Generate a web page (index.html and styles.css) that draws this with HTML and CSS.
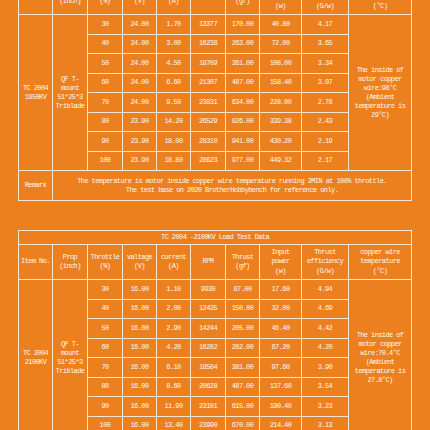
FILE: index.html
```html
<!DOCTYPE html>
<html>
<head>
<meta charset="utf-8">
<link rel="stylesheet" href="styles.css">
</head>
<body>
<div class="page">
  <table class="data first">
    <colgroup>
      <col class="c1"><col class="c2"><col class="c3"><col class="c4"><col class="c5"><col class="c6"><col class="c7"><col class="c8"><col class="c9"><col class="c10">
    </colgroup>
    <tr class="title"><td colspan="10">TC 2004 -1950KV Load Test Data</td></tr>
    <tr class="head">
      <td>Item No.</td><td>Prop<br>(inch)</td><td>Throttle<br>(%)</td><td>voltage<br>(V)</td><td>current<br>(A)</td><td>RPM</td><td>Thrust<br>(gf)</td><td>Input<br>power<br>(w)</td><td>Thrust<br>efficiency<br>(G/w)</td><td>copper wire<br>temperature<br>(°C)</td>
    </tr>
    <tr class="row"><td rowspan="8" class="multi">TC 2004<br>1950KV</td><td rowspan="8" class="multi">QF T-<br>mount<br>51*25*3<br>Triblade</td><td>30</td><td>24.00</td><td>1.70</td><td>13377</td><td>170.00</td><td>40.80</td><td>4.17</td><td rowspan="8" class="multi">The inside of<br>motor copper<br>wire:98°C<br>(Ambient<br>temperature is<br>29°C)</td></tr>
    <tr class="row"><td>40</td><td>24.00</td><td>3.00</td><td>16238</td><td>263.00</td><td>72.00</td><td>3.65</td></tr>
    <tr class="row"><td>50</td><td>24.00</td><td>4.50</td><td>18709</td><td>361.00</td><td>108.00</td><td>3.34</td></tr>
    <tr class="row"><td>60</td><td>24.00</td><td>6.60</td><td>21307</td><td>487.00</td><td>158.40</td><td>3.07</td></tr>
    <tr class="row"><td>70</td><td>24.00</td><td>9.50</td><td>23831</td><td>634.00</td><td>228.00</td><td>2.78</td></tr>
    <tr class="row"><td>80</td><td>23.90</td><td>14.20</td><td>26529</td><td>826.00</td><td>339.38</td><td>2.43</td></tr>
    <tr class="row"><td>90</td><td>23.90</td><td>18.00</td><td>28310</td><td>941.00</td><td>430.20</td><td>2.19</td></tr>
    <tr class="row"><td>100</td><td>23.90</td><td>18.80</td><td>28623</td><td>977.00</td><td>449.32</td><td>2.17</td></tr>
    <tr class="remark"><td>Remark</td><td colspan="9" class="multi">The temperature is motor inside copper wire temperature running 2MIN at 100% throttle.<br>The test base on 2020 BrotherHobbybench for reference only.</td></tr>
  </table>

  <table class="data second">
    <colgroup>
      <col class="c1"><col class="c2"><col class="c3"><col class="c4"><col class="c5"><col class="c6"><col class="c7"><col class="c8"><col class="c9"><col class="c10">
    </colgroup>
    <tr class="title"><td colspan="10">TC 2004 -2100KV Load Test Data</td></tr>
    <tr class="head">
      <td>Item No.</td><td>Prop<br>(inch)</td><td>Throttle<br>(%)</td><td>valtage<br>(V)</td><td>current<br>(A)</td><td>RPM</td><td>Thrust<br>(gf)</td><td>Input<br>power<br>(w)</td><td>Thrust<br>efficiency<br>(G/w)</td><td>copper wire<br>temperature<br>(°C)</td>
    </tr>
    <tr class="row"><td rowspan="8" class="multi">TC 2004<br>2100KV</td><td rowspan="8" class="multi">QF T-<br>mount<br>51*25*3<br>Triblade</td><td>30</td><td>16.00</td><td>1.10</td><td>9930</td><td>87.00</td><td>17.60</td><td>4.94</td><td rowspan="8" class="multi">The inside of<br>motor copper<br>wire:70.4°C<br>(Ambient<br>temperature is<br>27.8°C)</td></tr>
    <tr class="row"><td>40</td><td>16.00</td><td>2.00</td><td>12435</td><td>150.00</td><td>32.00</td><td>4.69</td></tr>
    <tr class="row"><td>50</td><td>16.00</td><td>2.90</td><td>14244</td><td>205.00</td><td>46.40</td><td>4.42</td></tr>
    <tr class="row"><td>60</td><td>16.00</td><td>4.20</td><td>16282</td><td>282.00</td><td>67.20</td><td>4.20</td></tr>
    <tr class="row"><td>70</td><td>16.00</td><td>6.10</td><td>18504</td><td>381.00</td><td>97.60</td><td>3.90</td></tr>
    <tr class="row"><td>80</td><td>16.00</td><td>8.60</td><td>20628</td><td>487.00</td><td>137.60</td><td>3.54</td></tr>
    <tr class="row"><td>90</td><td>16.00</td><td>11.90</td><td>23101</td><td>615.00</td><td>190.40</td><td>3.23</td></tr>
    <tr class="row"><td>100</td><td>16.00</td><td>13.40</td><td>23990</td><td>670.00</td><td>214.40</td><td>3.13</td></tr>
  </table>
</div>
</body>
</html>
```

FILE: styles.css
```css
html, body {
  margin: 0;
  padding: 0;
  background: #ec801f;
  overflow: hidden;
}
.page {
  width: 430px;
  height: 430px;
  overflow: hidden;
  padding-left: 18px;
  box-sizing: border-box;
  font-family: "Liberation Mono", "DejaVu Sans Mono", monospace;
  font-size: 7px;
  letter-spacing: -0.6px;
  color: #fff6ec;
}
.data {
  border-collapse: collapse;
  table-layout: fixed;
  width: 394px;
}
.data td {
  border: 1px solid #fbe6d2;
  text-align: center;
  vertical-align: middle;
  padding: 0;
  line-height: 9px;
  white-space: nowrap;
}
.first {
  margin-top: -35px;
}
.second {
  margin-top: 29px;
}
.c1 { width: 34px; }
.c2 { width: 35px; }
.c3 { width: 35px; }
.c4 { width: 34px; }
.c5 { width: 34px; }
.c6 { width: 35px; }
.c7 { width: 34px; }
.c8 { width: 42px; }
.c9 { width: 47px; }
.c10 { width: 63px; }
.title td {
  height: 13px;
}
.head td {
  height: 34px;
  line-height: 9.5px;
}
.row td {
  height: 18.5px;
}
.remark td {
  height: 29px;
}
```
